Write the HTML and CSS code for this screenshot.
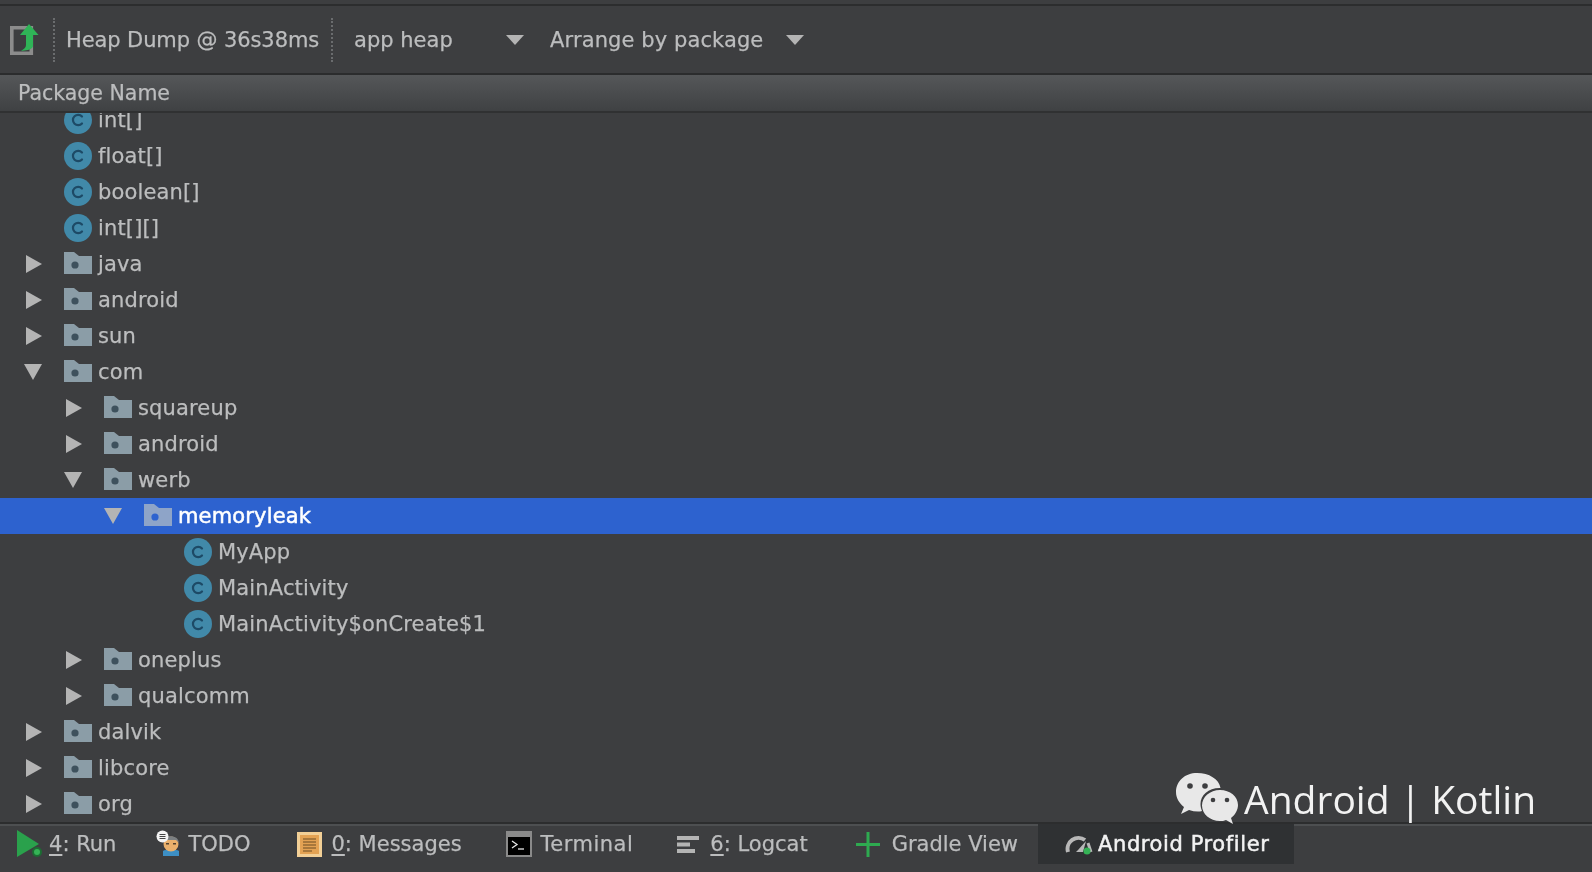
FILE: index.html
```html
<!DOCTYPE html>
<html lang="en">
<head>
<meta charset="utf-8">
<title>Android Profiler</title>
<link rel="stylesheet" href="styles.css">
</head>
<body>
<svg class="defs" width="0" height="0" aria-hidden="true">
  <defs>
    <symbol id="folder" viewBox="0 0 28 22"><path d="M0 0h10l5 4h13v18H0z" fill="#8b9da7"/><circle cx="11" cy="13" r="3.6" fill="#3e515d"/></symbol>
    <symbol id="folder-sel" viewBox="0 0 28 22"><path d="M0 0h10l5 4h13v18H0z" fill="#8ea4c8"/><circle cx="11" cy="13" r="3.6" fill="#2d62cf"/></symbol>
    <symbol id="cls" viewBox="0 0 28 28"><circle cx="14" cy="14" r="14" fill="#4189a9"/><path d="M18 10.500A5.200 5.200 0 1 0 18 17.500" fill="none" stroke="#1d4a66" stroke-width="2.200" stroke-linecap="round"/></symbol>
    <symbol id="right" viewBox="0 0 16 18"><path d="M0 0l16 9L0 18z" fill="#b4b4b4"/></symbol>
    <symbol id="down" viewBox="0 0 18 16"><path d="M0 0h18L9 16z" fill="#b4b4b4"/></symbol>
  </defs>
</svg>
<div class="app">
  <header class="toolbar">
    <svg class="export-icon" width="30" height="32" viewBox="0 0 30 32"><path d="M1.800 3.800h19.500v25.500H1.800z" fill="none" stroke="#8c8c8c" stroke-width="3.600"/><path d="M19 0l9.500 11H23v11c0 2-3 3.500-5 4l-7 1c3-2 5-3.500 5-6V11h-6z" fill="#2fb457"/></svg>
    <span class="dots"></span>
    <span class="tool-text dump">Heap Dump @ 36s38ms</span>
    <span class="dots second"></span>
    <span class="tool-text heap">app heap</span>
    <svg class="caret first" width="18" height="10" viewBox="0 0 18 10"><path d="M0 0h18L9 10z" fill="#b4b4b4"/></svg>
    <span class="tool-text arrange">Arrange by package</span>
    <svg class="caret last" width="18" height="10" viewBox="0 0 18 10"><path d="M0 0h18L9 10z" fill="#b4b4b4"/></svg>
  </header>
  <div class="col-head">Package Name</div>
  <main class="tree">
    <ul class="rows">
      <li class="row d0 leaf"><svg class="c"><use href="#cls"/></svg><span>int[]</span></li>
      <li class="row d0 leaf"><svg class="c"><use href="#cls"/></svg><span>float[]</span></li>
      <li class="row d0 leaf"><svg class="c"><use href="#cls"/></svg><span>boolean[]</span></li>
      <li class="row d0 leaf"><svg class="c"><use href="#cls"/></svg><span>int[][]</span></li>
      <li class="row d0"><svg class="a r"><use href="#right"/></svg><svg class="f"><use href="#folder"/></svg><span>java</span></li>
      <li class="row d0"><svg class="a r"><use href="#right"/></svg><svg class="f"><use href="#folder"/></svg><span>android</span></li>
      <li class="row d0"><svg class="a r"><use href="#right"/></svg><svg class="f"><use href="#folder"/></svg><span>sun</span></li>
      <li class="row d0"><svg class="a o"><use href="#down"/></svg><svg class="f"><use href="#folder"/></svg><span>com</span></li>
      <li class="row d1"><svg class="a r"><use href="#right"/></svg><svg class="f"><use href="#folder"/></svg><span>squareup</span></li>
      <li class="row d1"><svg class="a r"><use href="#right"/></svg><svg class="f"><use href="#folder"/></svg><span>android</span></li>
      <li class="row d1"><svg class="a o"><use href="#down"/></svg><svg class="f"><use href="#folder"/></svg><span>werb</span></li>
      <li class="row d2 selected"><svg class="a o"><use href="#down"/></svg><svg class="f"><use href="#folder-sel"/></svg><span>memoryleak</span></li>
      <li class="row d2 leaf"><svg class="c"><use href="#cls"/></svg><span>MyApp</span></li>
      <li class="row d2 leaf"><svg class="c"><use href="#cls"/></svg><span>MainActivity</span></li>
      <li class="row d2 leaf"><svg class="c"><use href="#cls"/></svg><span>MainActivity$onCreate$1</span></li>
      <li class="row d1"><svg class="a r"><use href="#right"/></svg><svg class="f"><use href="#folder"/></svg><span>oneplus</span></li>
      <li class="row d1"><svg class="a r"><use href="#right"/></svg><svg class="f"><use href="#folder"/></svg><span>qualcomm</span></li>
      <li class="row d0"><svg class="a r"><use href="#right"/></svg><svg class="f"><use href="#folder"/></svg><span>dalvik</span></li>
      <li class="row d0"><svg class="a r"><use href="#right"/></svg><svg class="f"><use href="#folder"/></svg><span>libcore</span></li>
      <li class="row d0"><svg class="a r"><use href="#right"/></svg><svg class="f"><use href="#folder"/></svg><span>org</span></li>
    </ul>
  </main>
  <footer class="bar">
    <div class="tab t-run">
      <svg width="25" height="28" viewBox="0 0 25 28"><path d="M0 0l22 14L0 27z" fill="#2aa14c"/><circle cx="20" cy="22" r="5" fill="#1c6d33"/><circle cx="20" cy="22" r="3" fill="#35b356"/></svg>
      <span><u>4</u>: Run</span>
    </div>
    <div class="tab t-todo">
      <svg width="27" height="28" viewBox="0 0 27 28"><path d="M7 21c2-2 14-2 16 0v5H7z" fill="#3d8fc4"/><circle cx="15" cy="14" r="7.5" fill="#eab06c"/><path d="M7 13c-1-8 15-10 16 0l-3-3H10z" fill="#7b7f82"/><circle cx="6.5" cy="6.5" r="6" fill="#f4f4f4"/><path d="M3.5 4.5h6M3.5 6.500h6M3.500 8.500h6" stroke="#444" stroke-width="1"/><rect x="10" y="13" width="3" height="1.500" fill="#54422e"/><rect x="17" y="13" width="3" height="1.500" fill="#54422e"/></svg>
      <span>TODO</span>
    </div>
    <div class="tab t-msg">
      <svg width="25" height="25" viewBox="0 0 25 25"><rect width="25" height="25" fill="#f2cf96"/><rect x="3" y="3" width="19" height="19" fill="#e3a253"/><path d="M6 7h13M6 10h13M6 13h13M6 16h13M6 19h9" stroke="#6d4c24" stroke-width="1.200"/></svg>
      <span><u>0</u>: Messages</span>
    </div>
    <div class="tab t-term">
      <svg width="26" height="26" viewBox="0 0 26 26"><rect width="26" height="26" fill="#8a8a8a"/><rect x="2" y="6" width="22" height="18" fill="#000"/><path d="M6 10l5 3.500-5 3.500" fill="none" stroke="#e8e8e8" stroke-width="1.300"/><path d="M12 18h6" stroke="#e8e8e8" stroke-width="1.300"/></svg>
      <span>Terminal</span>
    </div>
    <div class="tab t-log">
      <svg width="22" height="17" viewBox="0 0 22 17"><path d="M0 0h22v4H0zM0 6.500h13v4H0zM0 13h18v4H0z" fill="#b4b4b4"/></svg>
      <span><u>6</u>: Logcat</span>
    </div>
    <div class="tab t-gradle">
      <svg width="24" height="25" viewBox="0 0 24 25"><path d="M10.500 0h3v11h10.500v3H13.500v11h-3V14H0v-3h10.500z" fill="#2eaa50"/></svg>
      <span>Gradle View</span>
    </div>
    <div class="tab t-prof">
      <svg width="28" height="22" viewBox="0 0 28 22"><path d="M3 19A11 11 0 0 1 20 7" fill="none" stroke="#b8b8b8" stroke-width="4"/><path d="M11 19l2-2 8-9-3 11z" fill="#b8b8b8"/><path d="M23 10l3 9" stroke="#b8b8b8" stroke-width="3"/><circle cx="22" cy="18" r="3.500" fill="#35b356"/></svg>
      <span>Android Profiler</span>
    </div>
  </footer>
  <div class="mark">
    <svg width="62" height="52" viewBox="0 0 62 52"><path d="M21 0C9 0 0 8 0 19c0 6 3 11 8 15l-3 7 8-4c3 1 6 1.500 9 1.500 1 0 3 0 4-.5-1-2-1.500-5-1.500-7 0-9 8-16 19-16h1C43 6 33 0 21 0z" fill="#e8e8e8"/><path d="M44 17c-10 0-18 7-18 15.500S34 48 44 48c2 0 4 0 6-1l7 4-2-6c4-3 7-8 7-13 0-8.500-8-15-18-15z" fill="#e8e8e8"/><circle cx="14" cy="13" r="2.800" fill="#3d3e40"/><circle cx="29" cy="13" r="2.800" fill="#3d3e40"/><circle cx="37" cy="27" r="2.300" fill="#3d3e40"/><circle cx="51" cy="27" r="2.300" fill="#3d3e40"/></svg>
    <span>Android | Kotlin</span>
  </div>
</div>
</body>
</html>
```
FILE: styles.css
```css
* { box-sizing: border-box; }
html, body { margin: 0; height: 100%; background: #3d3e40; }
.defs { position: absolute; }
.app {
  position: relative;
  width: 1592px;
  height: 872px;
  overflow: hidden;
  display: flex;
  flex-direction: column;
  background: #3d3e40;
  color: #bcbdbe;
  font-family: "DejaVu Sans", sans-serif;
  font-size: 21px;
  -webkit-text-stroke: 0.25px currentColor;
  filter: blur(0.4px);
}
.toolbar {
  flex: 0 0 71px;
  display: flex;
  align-items: center;
  margin-top: 4px;
  padding-left: 10px;
  border-top: 2px solid #2c2d2e;
  border-bottom: 2px solid #2b2c2d;
  background: #3d3e40;
}
.export-icon { flex: none; }
.dots {
  flex: none;
  width: 0;
  height: 44px;
  margin-left: 13px;
  border-left: 2px dotted #6a6c6e;
}
.dots.second { margin-left: 12px; }
.tool-text { flex: none; white-space: nowrap; margin-left: 11px; }
.tool-text.dump { letter-spacing: -0.1px; }
.tool-text.heap { margin-left: 21px; width: 97px; }
.tool-text.arrange { margin-left: 26px; width: 214px; letter-spacing: 0.1px; }
.caret { flex: none; }
.caret.first { margin-left: 55px; }
.caret.last { margin-left: 22px; }

.col-head {
  flex: 0 0 38px;
  display: flex;
  align-items: center;
  padding-left: 18px;
  font-size: 20.500px;
  background: linear-gradient(#555759, #3f4143);
  border-bottom: 2px solid #303132;
  position: relative;
  z-index: 1;
}
.tree { flex: 1 1 0; min-height: 0; overflow: hidden; }
.rows { list-style: none; margin: -11px 0 0; padding: 0; letter-spacing: 0.15px; }
.row {
  height: 36px;
  display: flex;
  align-items: center;
  white-space: nowrap;
}
.row.d0 { padding-left: 24px; }
.row.d1 { padding-left: 64px; }
.row.d2 { padding-left: 104px; }
.row.leaf.d0 { padding-left: 64px; }
.row.leaf.d2 { padding-left: 184px; }
.a { flex: none; width: 18px; height: 18px; margin-right: 22px; }
.a.r { width: 16px; margin-left: 2px; }
.a.o { height: 16px; }
.f { flex: none; width: 28px; height: 22px; margin: -2px 6px 0 0; }
.c { flex: none; width: 28px; height: 28px; margin-right: 6px; }
.selected { background: #2d62cf; color: #fff; -webkit-text-stroke-width: 0.5px; }

.bar {
  flex: 0 0 50px;
  display: flex;
  align-items: flex-start;
  border-top: 2px solid #2c2d2e;
  box-shadow: inset 0 2px 0 #4d4f51;
}
.tab {
  flex: none;
  height: 40px;
  display: flex;
  align-items: center;
  white-space: nowrap;
}
.tab u { text-underline-offset: 3px; text-decoration-thickness: 1.500px; }
.tab span { margin-left: 7px; }
.t-run { margin-left: 17px; }
.t-todo { margin-left: 40px; }
.t-todo span { margin-left: 5px; }
.t-msg { margin-left: 47px; }
.t-msg span { margin-left: 9px; }
.t-term { margin-left: 44px; }
.t-term span { margin-left: 9px; letter-spacing: 0.5px; }
.t-log { margin-left: 44px; }
.t-log span { margin-left: 11px; }
.t-gradle { margin-left: 48px; }
.t-gradle span { margin-left: 12px; }
.t-prof {
  margin-left: 20px;
  width: 256px;
  padding-left: 27px;
  background: #2f3133;
  color: #f2f2f2;
  letter-spacing: 0.6px;
  -webkit-text-stroke-width: 0.5px;
}
.t-prof span { margin-left: 5px; }
.mark {
  position: absolute;
  left: 1176px;
  top: 772px;
  display: flex;
  align-items: center;
  color: #f2f2f2;
  font-size: 39px;
  font-family: "Open Sans", sans-serif;
  -webkit-text-stroke-width: 0;
}
.mark span { margin-left: 6px; white-space: nowrap; }
```
